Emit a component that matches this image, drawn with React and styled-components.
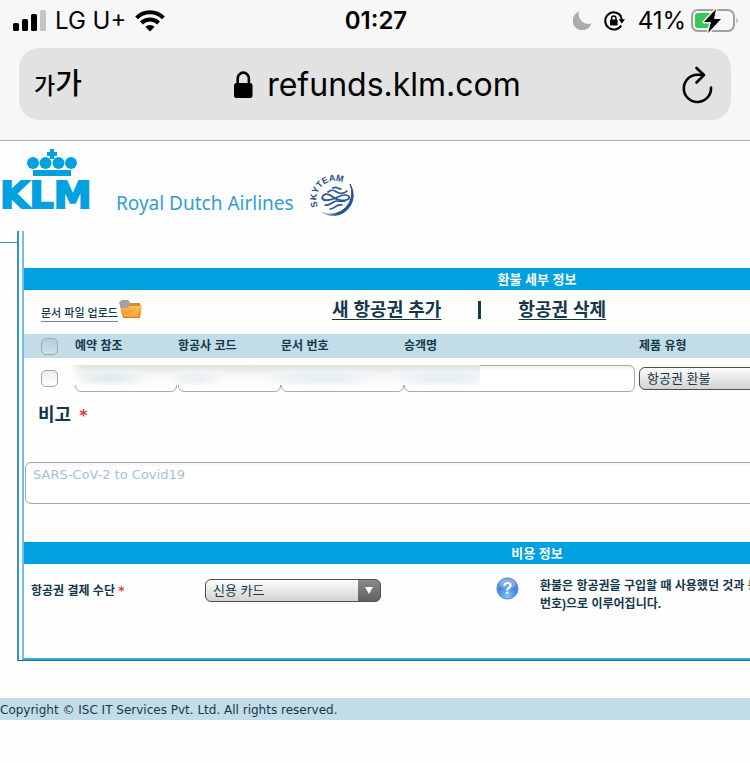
import React from 'react'
import styled, { createGlobalStyle } from 'styled-components'

const korean = "'Liberation Sans', 'Noto Sans CJK KR', sans-serif"
const verdana = "'DejaVu Sans', 'Noto Sans CJK KR', sans-serif"
const system = "Inter, 'Noto Sans CJK KR', sans-serif"

const navy = '#14384a'
const klmBlue = '#00a1de'
const paleBlue = '#c2dde8'

const GlobalStyle = createGlobalStyle`
  * {
    box-sizing: border-box;
  }

  body {
    margin: 0;
    background: #fefefe;
    color: ${navy};
    font-family: ${korean};
  }
`

/* browser chrome */

const Chrome = styled.header`
  background: #f7f7f7;
  border-bottom: 1px solid #acacae;
  color: #000;
  font-family: ${system};
  padding-bottom: 20px;
`

const StatusBar = styled.div`
  display: grid;
  grid-template-columns: 1fr auto 1fr;
  align-items: center;
  height: 48px;
  padding: 0 11px 7px 13px;
  font-size: 24px;
  line-height: 40px;
`

const StatusGroup = styled.div`
  display: flex;
  align-items: center;
  justify-content: ${props => (props.$end ? 'flex-end' : 'flex-start')};
  gap: ${props => props.$gap}px;
`

const Clock = styled.time`
  font-weight: 600;
`

const AddressBar = styled.div`
  display: grid;
  grid-template-columns: 1fr auto 1fr;
  align-items: center;
  height: 72px;
  margin: 0 19px;
  padding: 1px 18px 0 15px;
  border-radius: 20px;
  background: #e2e2e2;
`

const ChromeButton = styled.button`
  display: flex;
  align-items: baseline;
  justify-self: ${props => (props.$end ? 'end' : 'start')};
  padding: 0;
  border: 0;
  background: none;
  color: #000;
  font: 500 29px/40px ${system};

  small {
    font-size: 23px;
  }
`

const Address = styled.div`
  display: flex;
  align-items: center;
  gap: 14px;
  padding-left: 8px;
  font-size: 32px;
  line-height: 40px;
`

/* site */

const Site = styled.div`
  overflow: hidden;
`

const Brand = styled.div`
  display: flex;
  align-items: flex-end;
  height: 90px;
  padding-bottom: 8px;
`

const LogoLink = styled.a`
  display: flex;
  margin-bottom: 12px;

  svg {
    overflow: visible;
  }
`

const Tagline = styled.span`
  margin: 0 14px 6px 10px;
  color: #2f9fd3;
  font: 19px/28px 'Noto Sans', sans-serif;
  white-space: nowrap;
`

const Frame = styled.div`
  display: flex;
  min-width: 1050px;
`

const Stub = styled.div`
  width: 17px;
  height: 12px;
  border-bottom: 1px solid #3c9cc6;
`

const Outer = styled.div`
  flex: 1;
  padding-left: 3px;
  border-left: 2px solid #3593c2;
  border-bottom: 1px solid #1f6d92;
`

const Panel = styled.main`
  padding-top: 37px;
  border-left: 2px solid #6cc3e6;
  border-bottom: 2px solid #3ba6dc;
`

const SectionTitle = styled.h2`
  height: 22px;
  margin: 0;
  background: ${klmBlue};
  color: #fff;
  font-size: 13px;
  font-weight: 700;
  line-height: 24px;
  text-align: center;
`

const Toolbar = styled.div`
  display: flex;
  align-items: center;
  height: 44px;
  padding: 0 0 5px 17px;
`

const UploadLink = styled.a`
  display: flex;
  align-items: center;
  gap: 1px;
  margin-right: 190px;
  color: ${navy};
  font-size: 11px;
  font-weight: 500;
  line-height: 16px;
  text-decoration: none;

  span {
    margin-top: 8px;
    border-bottom: 1px solid #6d8490;
  }
`

const TicketLink = styled.a`
  color: ${navy};
  font-size: 18px;
  font-weight: 700;
  line-height: 24px;
  text-underline-offset: 3px;
`

const Divider = styled.span`
  width: 3px;
  height: 18px;
  margin: 0 37px;
  background: ${navy};
`

const Tickets = styled.table`
  width: 100%;
  border-collapse: collapse;
  table-layout: fixed;

  th,
  td {
    padding: 0;
    text-align: left;
  }

  th {
    height: 24px;
    background: ${paleBlue};
    font-size: 12px;
    font-weight: 700;
    line-height: 16px;
  }

  td {
    height: 41px;
  }
`

const Column = styled.col`
  width: ${props => props.$width}px;
`

const CheckCell = styled.div`
  display: flex;
  padding-left: 17px;
`

const Checkbox = styled.input.attrs({ type: 'checkbox' })`
  appearance: none;
  width: 17px;
  height: 17px;
  margin: 0;
  border: 1px solid #a0a6aa;
  border-radius: 5px;
  background: ${props => (props.$tinted ? 'linear-gradient(#b4cedb, #cbe2ec)' : 'linear-gradient(#ededed, #fff)')};
`

const FieldCell = styled.td`
  position: relative;
`

const Field = styled.input`
  display: block;
  width: calc(100% - ${props => props.$inset || 0}px);
  height: 27px;
  border: 1px solid #a9a9a9;
  border-radius: 6px;
  background: linear-gradient(#f1f1f1, #fff 5px);
`

const Smudge = styled.span`
  position: absolute;
  top: 7px;
  left: -5px;
  z-index: 1;
  width: 410px;
  height: 20px;
  background:
    linear-gradient(90deg, #fefefe, transparent 12px),
    radial-gradient(ellipse 40px 10px at 40px 13px, #e0ecef 20%, transparent),
    radial-gradient(ellipse 28px 10px at 126px 13px, #e8f1f3 20%, transparent),
    radial-gradient(ellipse 60px 10px at 252px 13px, #e4eff2 20%, transparent),
    radial-gradient(ellipse 56px 10px at 374px 13px, #e4eff2 20%, transparent),
    linear-gradient(#dfdfdf, #f4f4f4 8px, #fefefe);
`

const SelectBox = styled.div`
  position: relative;
  width: 176px;

  &::after {
    content: '';
    position: absolute;
    top: 8px;
    right: 8px;
    border: 4px solid transparent;
    border-top: 7px solid #fff;
    border-bottom: 0;
    pointer-events: none;
  }
`

const Select = styled.select`
  appearance: none;
  display: block;
  width: 100%;
  height: 23px;
  padding: 0 30px 0 7px;
  border: 1px solid #4e4e4e;
  border-radius: 6px;
  background:
    linear-gradient(#8a8a8a, #606060) right / 22px 100% no-repeat,
    linear-gradient(#fdfdfd, #d2d2d2);
  color: ${navy};
  font: 13px/20px ${korean};
`

const RemarksLabel = styled.label`
  display: flex;
  align-items: center;
  gap: 8px;
  margin-bottom: 33px;
  padding: 3px 0 0 14px;
  font-size: 18px;
  font-weight: 700;
  line-height: 27px;
`

const Required = styled.span`
  color: #e8382f;
  font: 700 ${props => props.$size}px/18px ${verdana};
`

const Remarks = styled.textarea`
  display: block;
  width: calc(100% - 12px);
  height: 42px;
  margin: 0 0 38px 1px;
  padding: 3px 7px;
  border: 1px solid #a9a9a9;
  border-radius: 6px;
  background: linear-gradient(#f3f3f3, #fff 4px);
  color: #a0c4d6;
  font: 13px/18px ${verdana};
  resize: none;
`

const Payment = styled.div`
  display: grid;
  grid-template-columns: 174px 291px 44px auto;
  align-items: start;
  min-height: 94px;
  padding: 15px 0 0 7px;
  font-size: 12px;
  font-weight: 700;
  line-height: 24px;
`

const Help = styled.span`
  display: flex;
  margin-top: -2px;
`

const Notice = styled.p`
  margin: -2px 0 0;
  line-height: 18px;
`

const Footer = styled.footer`
  height: 22px;
  margin-top: 37px;
  background: ${paleBlue};
  font: 12px/25px ${verdana};
`

const SignalIcon = () => (
  <svg width="33" height="21" viewBox="0 0 33 21" aria-hidden="true">
    <rect x="0" y="13" width="6" height="8" rx="1.5" />
    <rect x="9" y="9" width="6" height="12" rx="1.5" />
    <rect x="18" y="4" width="6" height="17" rx="1.5" />
    <rect x="27" y="0" width="6" height="21" rx="1.5" fill="#c4c4c4" />
  </svg>
)

const WifiIcon = () => (
  <svg width="30" height="22" viewBox="0 0 30 22" aria-hidden="true">
    <g fill="none" stroke="#000" strokeWidth="4">
      <path d="M1.600 7.800a19 19 0 0 1 26.800 0" />
      <path d="M6.400 13a12.200 12.200 0 0 1 17.200 0" />
    </g>
    <path d="M15 21.400l-4.600-4.600a6.600 6.600 0 0 1 9.200 0z" />
  </svg>
)

const MoonIcon = () => (
  <svg width="19" height="19" viewBox="0 0 19 19" aria-hidden="true">
    <path d="M6.200 .5A9.600 9.600 0 1 0 18.500 12.200 9.400 9.400 0 0 1 6.200 .5z" fill="#acacac" />
  </svg>
)

const RotationLockIcon = () => (
  <svg width="22" height="20" viewBox="0 0 22 20" aria-hidden="true">
    <path d="M17 5.200A8.600 8.600 0 1 0 17.200 14.400" fill="none" stroke="#000" strokeWidth="2" />
    <path d="M16.200 4.500a8.600 8.600 0 0 1 1.600 4.500" fill="none" stroke="#000" strokeWidth="2" />
    <path d="M14.600 8.300h6.400l-3.200 4.300z" />
    <rect x="6" y="8.600" width="7.600" height="5.800" rx="1" />
    <path d="M7.600 9V7.200a2.200 2.200 0 0 1 4.400 0V9" fill="none" stroke="#000" strokeWidth="1.400" />
  </svg>
)

const BatteryIcon = () => (
  <svg width="48" height="26" viewBox="0 0 48 26" aria-hidden="true">
    <rect x="1" y="2" width="42" height="21" rx="6" fill="none" stroke="#a0a0a0" strokeWidth="2" />
    <path d="M45.500 9.500q2.500 3 0 6z" fill="#a0a0a0" />
    <path d="M7 5h13v15H7a3 3 0 0 1-3-3V8a3 3 0 0 1 3-3z" fill="#35c759" />
    <path d="M25 1L13 14h7l-3 11 13-14h-7z" stroke="#f7f7f7" strokeWidth="3" strokeLinejoin="round" />
    <path d="M25 1L13 14h7l-3 11 13-14h-7z" />
  </svg>
)

const LockIcon = () => (
  <svg width="19" height="28" viewBox="0 0 19 28" aria-hidden="true">
    <rect x="0" y="12" width="18.500" height="15" rx="2.500" />
    <path d="M3.700 13V7.600a5.600 6 0 0 1 11.200 0V13" fill="none" stroke="#000" strokeWidth="2.600" />
  </svg>
)

const ReloadIcon = () => (
  <svg width="31" height="38" viewBox="0 0 31 38" aria-hidden="true">
    <g fill="none" stroke="#000" strokeWidth="2.600" strokeLinecap="round" strokeLinejoin="round">
      <path d="M29 21.500A13.600 13.600 0 1 1 15.400 8.800H21" />
      <path d="M14.500 2l7.500 7-7.500 7.500" />
    </g>
  </svg>
)

const KlmLogo = () => (
  <svg width="106" height="62" viewBox="0 0 106 62" role="img" aria-label="KLM">
    <g fill={klmBlue}>
      <path d="M50 0h4v3h3v4h-3v3h-4V7h-3V3h3z" />
      <circle cx="33" cy="14" r="6" />
      <circle cx="45.500" cy="14" r="6" />
      <circle cx="58.500" cy="14" r="6" />
      <circle cx="71" cy="14" r="6" />
      <rect x="33" y="21" width="38" height="6" />
      <text
        x="0"
        y="59"
        fontFamily="DejaVu Sans, sans-serif"
        fontWeight="700"
        fontSize="38"
        stroke={klmBlue}
        strokeWidth="2"
      >
        KLM
      </text>
    </g>
  </svg>
)

const SkyTeamLogo = () => (
  <svg width="56" height="52" viewBox="0 0 56 52" role="img" aria-label="SkyTeam">
    <defs>
      <path id="sky-arc" d="M10 35.500A18.500 18.500 0 1 1 45 33" />
      <linearGradient id="sky-ring" x1="0" x2="1">
        <stop offset="0" stopColor="#c5d4e6" />
        <stop offset="0.500" stopColor="#24508c" />
      </linearGradient>
    </defs>
    <text fontFamily="Liberation Sans, sans-serif" fontWeight="700" fontSize="9" fill="#2b4f86">
      <textPath href="#sky-arc">SKYTEAM</textPath>
    </text>
    <path d="M42 13A20.500 20.500 0 0 1 14 41.500 21.500 21.500 0 0 0 42 13z" fill="url(#sky-ring)" stroke="url(#sky-ring)" />
    <g fill="none" stroke="#2b5792" strokeWidth="1.700" strokeLinecap="round">
      <path d="M14 27c2-6 7-4 11-1s8 4 13 3 4-5-1-5-8 3-12 4-9 3-11-1z" />
      <path d="M20 21c5-4 7 0 11 1s6 0 8-2" />
      <path d="M25 17c4-2 5 1 8 1" />
      <path d="M17 34c6 1 7-4 12-4 4 0 5 1 8 0" />
      <path d="M22 38c5 0 5-5 12-4" />
    </g>
  </svg>
)

const FolderIcon = () => (
  <svg width="23" height="20" viewBox="0 0 23 20" aria-hidden="true">
    <defs>
      <linearGradient id="folder" x2="0" y2="1">
        <stop stopColor="#ffc45b" />
        <stop offset="1" stopColor="#ec7718" />
      </linearGradient>
    </defs>
    <path d="M1 2l3-2h5l2 3h10l1 5-2 10H5L2 12z" fill="#d98a31" />
    <path d="M0 2l3-2h6l2 3-2 6H2z" fill="#a5a39c" />
    <path d="M2 8h6l3-2h12l-2 12H4z" fill="url(#folder)" />
    <path d="M5 14q8-1 13-5l2 .5-1 7H5z" fill="#ffb545" opacity=".8" />
  </svg>
)

const HelpIcon = () => (
  <svg width="23" height="23" viewBox="0 0 23 23" role="img" aria-label="도움말">
    <defs>
      <radialGradient id="help" cx=".5" cy=".85" r=".8">
        <stop stopColor="#82c4fa" />
        <stop offset=".6" stopColor="#4484dc" />
        <stop offset="1" stopColor="#6d98df" />
      </radialGradient>
    </defs>
    <circle cx="11.500" cy="11.500" r="10.600" fill="url(#help)" stroke="#5b8fdd" />
    <ellipse cx="11.500" cy="7" rx="8" ry="5" fill="#fff" opacity=".25" />
    <text x="11.500" y="17" textAnchor="middle" fontFamily="Liberation Sans, sans-serif" fontWeight="700" fontSize="16" fill="#fff">
      ?
    </text>
  </svg>
)

const App = () => (
  <>
    <GlobalStyle />

    <Chrome>
      <StatusBar>
        <StatusGroup $gap={9}>
          <SignalIcon />
          <span>LG U+</span>
          <WifiIcon />
        </StatusGroup>
        <Clock>01:27</Clock>
        <StatusGroup $end $gap={12}>
          <MoonIcon />
          <RotationLockIcon />
          <StatusGroup $gap={5}>
            <span>41%</span>
            <BatteryIcon />
          </StatusGroup>
        </StatusGroup>
      </StatusBar>

      <AddressBar>
        <ChromeButton type="button">
          <small>가</small>가
        </ChromeButton>
        <Address>
          <LockIcon />
          <span>refunds.klm.com</span>
        </Address>
        <ChromeButton $end type="button" aria-label="새로고침">
          <ReloadIcon />
        </ChromeButton>
      </AddressBar>
    </Chrome>

    <Site>
      <Brand>
        <LogoLink href="#home">
          <KlmLogo />
        </LogoLink>
        <Tagline>Royal Dutch Airlines</Tagline>
        <SkyTeamLogo />
      </Brand>

      <Frame>
        <Stub />
        <Outer>
          <Panel>
            <SectionTitle>환불 세부 정보</SectionTitle>

            <Toolbar>
              <UploadLink href="#upload">
                <span>문서 파일 업로드</span>
                <FolderIcon />
              </UploadLink>
              <TicketLink href="#add">새 항공권 추가</TicketLink>
              <Divider />
              <TicketLink href="#delete">항공권 삭제</TicketLink>
            </Toolbar>

            <Tickets>
              <colgroup>
                <Column $width={51} />
                <Column $width={103} />
                <Column $width={103} />
                <Column $width={123} />
                <Column $width={235} />
                <col />
              </colgroup>
              <thead>
                <tr>
                  <th>
                    <CheckCell>
                      <Checkbox $tinted aria-label="모두 선택" />
                    </CheckCell>
                  </th>
                  <th>예약 참조</th>
                  <th>항공사 코드</th>
                  <th>문서 번호</th>
                  <th>승객명</th>
                  <th>제품 유형</th>
                </tr>
              </thead>
              <tbody>
                <tr>
                  <td>
                    <CheckCell>
                      <Checkbox aria-label="선택" />
                    </CheckCell>
                  </td>
                  <FieldCell>
                    <Field aria-label="예약 참조" $inset={1} />
                    <Smudge />
                  </FieldCell>
                  <td>
                    <Field aria-label="항공사 코드" />
                  </td>
                  <td>
                    <Field aria-label="문서 번호" />
                  </td>
                  <td>
                    <Field aria-label="승객명" $inset={4} />
                  </td>
                  <td>
                    <SelectBox>
                      <Select aria-label="제품 유형">
                        <option>항공권 환불</option>
                      </Select>
                    </SelectBox>
                  </td>
                </tr>
              </tbody>
            </Tickets>

            <RemarksLabel htmlFor="remarks">
              비고 <Required $size={16}>*</Required>
            </RemarksLabel>
            <Remarks id="remarks" defaultValue="SARS-CoV-2 to Covid19" />

            <SectionTitle>비용 정보</SectionTitle>

            <Payment>
              <label htmlFor="payment">
                항공권 결제 수단 <Required $size={12}>*</Required>
              </label>
              <SelectBox>
                <Select id="payment">
                  <option>신용 카드</option>
                </Select>
              </SelectBox>
              <Help>
                <HelpIcon />
              </Help>
              <Notice>
                환불은 항공권을 구입할 때 사용했던 것과 동
                <br />
                번호)으로 이루어집니다.
              </Notice>
            </Payment>
          </Panel>
        </Outer>
      </Frame>

      <Footer>Copyright © ISC IT Services Pvt. Ltd. All rights reserved.</Footer>
    </Site>
  </>
)

export default App
